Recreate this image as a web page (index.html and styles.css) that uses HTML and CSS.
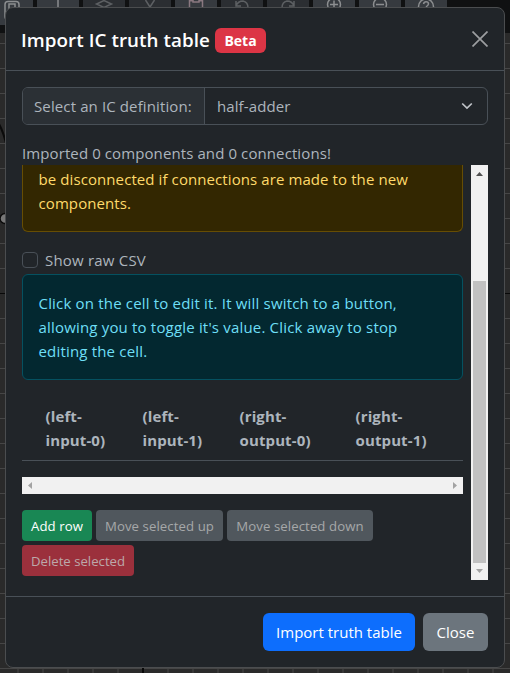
FILE: index.html
```html
<!DOCTYPE html>
<html lang="en">
<head>
<meta charset="utf-8">
<title>Import IC truth table</title>
<link rel="stylesheet" href="styles.css">
</head>
<body>
<div class="workspace">
  <svg class="canvas" width="510" height="673" aria-hidden="true">
    <defs>
      <pattern id="grid" x="17" y="18" width="25" height="25" patternUnits="userSpaceOnUse">
        <path d="M0 .5H25M1 0V25" stroke="#464646" stroke-width="1" fill="none"/>
      </pattern>
    </defs>
    <rect width="510" height="673" fill="#2a2a2a"/>
    <rect width="510" height="673" fill="url(#grid)"/>
    <path d="M0 293.5H510" stroke="#080808" stroke-width="1"/>
    <path d="M143 0V673" stroke="#080808" stroke-width="2"/>
    <path d="M-1 124Q3 131 6 143" stroke="#0a0a0a" stroke-width="2" fill="none"/>
    <circle cx="5" cy="218.500" r="5" fill="#777" stroke="#0a0a0a" stroke-width="1.500"/>
  </svg>
  <div class="toolbar">
    <span class="tool first"><svg viewBox="0 0 22 22"><rect x="4" y="1.500" width="14" height="18" rx="3"/><rect x="8" y="4" width="6" height="10"/></svg></span>
    <span class="tool"><svg viewBox="0 0 22 22"><path d="M11 0V18"/></svg></span>
    <span class="tool dim"><svg viewBox="0 0 22 22"><path d="M11 .5L18.500 4L11 7.500L3.500 4ZM3.500 8L11 12L18.500 8"/></svg></span>
    <span class="tool dim"><svg viewBox="0 0 22 22"><path d="M6.500 0L11 7L15.500 0M11 7V16"/></svg></span>
    <span class="tool paste"><svg viewBox="0 0 22 22"><path d="M8 .8H4.500V18H17.500V.8H14M8 -1V2H14V-1"/></svg></span>
    <span class="tool dim"><svg viewBox="0 0 22 22"><path d="M5 1V6H10M5 6Q7 1 12 1Q17 2 17 8"/></svg></span>
    <span class="tool dim"><svg viewBox="0 0 22 22"><path d="M17 1V6H12M17 6Q15 1 10 1Q5 2 5 8"/></svg></span>
    <span class="tool"><svg viewBox="0 0 22 22"><circle cx="11" cy="4.500" r="6.500"/><path d="M7 4.500H15M11 .5V8.500"/></svg></span>
    <span class="tool"><svg viewBox="0 0 22 22"><circle cx="11" cy="4.500" r="6.500"/><path d="M7 4.500H15"/></svg></span>
    <span class="tool"><svg viewBox="0 0 22 22"><circle cx="11" cy="6.500" r="7.500"/><path d="M8.500 4Q9 1.800 11 1.800Q13.500 1.800 13.500 4Q13.500 5 11 7"/></svg></span>
  </div>
  <section class="modal" role="dialog">
    <header class="modal-header">
      <h1 class="title">Import IC truth table</h1>
      <span class="badge">Beta</span>
      <svg class="close" viewBox="0 0 16 16"><path d="M.5 .5L15.500 15.500M15.500 .5L.5 15.500"/></svg>
    </header>
    <main class="modal-body">
      <div class="input-group">
        <label class="group-label">Select an IC definition:</label>
        <div class="select"><span class="select-value">half-adder</span>
          <svg class="chevron" viewBox="0 0 12 8"><path d="M1.200 1.500L6 6L10.800 1.500"/></svg>
        </div>
      </div>
      <div class="status">Imported 0 components and 0 connections!</div>
      <div class="scroll-area">
        <div class="content">
          <div class="alert warning">
            <div>be disconnected if connections are made to the new</div>
            <div>components.</div>
          </div>
          <div class="check"><span class="box"></span><span class="csv">Show raw CSV</span></div>
          <div class="alert info">
            <div>Click on the cell to edit it. It will switch to a button,</div>
            <div>allowing you to toggle it's value. Click away to stop</div>
            <div>editing the cell.</div>
          </div>
          <div class="table-head">
            <div>(left-<br>input-0)</div>
            <div>(left-<br>input-1)</div>
            <div>(right-<br>output-0)</div>
            <div>(right-<br>output-1)</div>
          </div>
          <div class="hbar">
            <svg viewBox="0 0 4 7"><path d="M4 0V7L0 3.500Z"/></svg>
            <svg viewBox="0 0 4 7"><path d="M0 0V7L4 3.500Z"/></svg>
          </div>
          <div class="actions">
            <button class="btn small add">Add row</button>
            <button class="btn small up">Move selected up</button>
            <button class="btn small down">Move selected down</button>
            <button class="btn small delete">Delete selected</button>
          </div>
        </div>
        <div class="vbar">
          <svg class="arrow-up" viewBox="0 0 7 4"><path d="M0 4H7L3.500 0Z"/></svg>
          <div class="thumb"></div>
          <svg class="arrow-down" viewBox="0 0 7 4"><path d="M0 0H7L3.500 4Z"/></svg>
        </div>
      </div>
    </main>
    <footer class="modal-footer">
      <button class="btn primary">Import truth table</button>
      <button class="btn secondary">Close</button>
    </footer>
  </section>
</div>
</body>
</html>
```
FILE: styles.css
```css
* { box-sizing: border-box; }
body { margin: 0; overflow: hidden; background: #2a2a2a; }
.workspace {
  position: relative;
  width: 510px;
  height: 673px;
  overflow: hidden;
  font: 15px/24px "Open Sans", "Noto Sans", sans-serif;
  color: #adb5bd;
}
.canvas { position: absolute; inset: 0; }
.toolbar {
  position: absolute;
  top: 0;
  left: 0;
  width: 510px;
  height: 33px;
  display: flex;
  gap: 4px;
  background: #101112;
}
.tool { width: 42px; height: 25px; background: #363a3f; display: flex; justify-content: center; flex: none; }
.tool.first { width: 33px; padding-right: 9px; }
.tool svg { width: 22px; height: 22px; fill: none; stroke: #8c8e90; stroke-width: 1.5; }
.tool.dim { background: #2b2e32; }
.tool.dim svg { stroke: #5d6063; }
.tool.paste svg { stroke: #8a7880; }
.modal {
  position: absolute;
  left: 5px;
  top: 7px;
  width: 500px;
  height: 661px;
  display: flex;
  flex-direction: column;
  background: #212529;
  border: 1px solid #4b4d4f;
  border-radius: 8px;
}
.modal-header { display: flex; align-items: center; height: 63px; padding: 0 16px; border-bottom: 1px solid #495057; flex: none; }
.title { margin: 0 0 0 -1px; font-size: 18.800px; line-height: 30px; font-weight: 600; letter-spacing: .07px; color: #fff; white-space: nowrap; width: 194px; padding-top: 2px; }
.badge { width: 51px; height: 25px; margin-top: 3px; border-radius: 6px; background: #dc3545; color: #fff; font-size: 14px; font-weight: 700; line-height: 26px; text-align: center; }
.close { width: 16px; height: 16px; margin-left: auto; fill: none; stroke: #9c9ea0; stroke-width: 1.700; }
.modal-body { padding: 16px; flex: 1; min-height: 0; }
.input-group { display: flex; height: 38px; border: 1px solid #495057; border-radius: 6px; overflow: hidden; }
.group-label { width: 182px; padding: 6px 11px; line-height: 25px; letter-spacing: .12px; background: #2b3035; border-right: 1px solid #495057; white-space: nowrap; }
.select { flex: 1; display: flex; align-items: center; justify-content: space-between; padding: 0 14px 0 12px; letter-spacing: .1px; }
.chevron { width: 12px; height: 8px; fill: none; stroke: #c0c4c8; stroke-width: 1.700; }
.status { margin-top: 17px; line-height: 23px; letter-spacing: .1px; white-space: nowrap; }
.scroll-area { display: flex; justify-content: space-between; height: 415px; }
.content { width: 441px; }
.alert { border: 1px solid; border-radius: 6px; padding: 16px 15.500px; white-space: nowrap; }
.warning { height: 67px; padding-top: 2px; border-top: 0; border-radius: 0 0 6px 6px; background: #332701; border-color: #664d03; color: #ffda6a; letter-spacing: .09px; }
.check { display: flex; align-items: center; gap: 7px; height: 24px; margin: 16px 0 2px; letter-spacing: .2px; }
.box { width: 16px; height: 16px; border: 1px solid #495057; border-radius: 4px; }
.info { height: 106px; background: #032830; border-color: #055160; color: #6edff6; letter-spacing: .18px; }
.table-head { display: grid; grid-template-columns: 97px 97px 116px 1fr; margin-top: 16px; height: 65px; padding: 8px 0 0 23.500px; border-bottom: 1px solid #495057; font-weight: 700; letter-spacing: .12px; white-space: nowrap; }
.hbar { display: flex; justify-content: space-between; align-items: center; height: 17px; margin: 16px 0; padding: 0 6px; background: #f1f1f1; }
.hbar svg { width: 4px; height: 7px; fill: #a3a3a3; }
.actions { display: flex; flex-wrap: wrap; gap: 4px; }
.btn { border: 0; border-radius: 6px; padding: 0; height: 38px; font: 15px/38px "Open Sans", "Noto Sans", sans-serif; color: #fff; text-align: center; white-space: nowrap; }
.btn.small { height: 31px; border-radius: 4px; font-size: 13.200px; line-height: 32px; letter-spacing: .08px; }
.add { width: 70px; background: #198754; }
.up { width: 127px; background: #50575d; }
.down { width: 146px; background: #50575d; }
.up, .down { color: #a6a8a9; }
.delete { width: 112px; background: #9b303c; color: #bca8aa; }
.btn.delete { letter-spacing: 0; }
.vbar { display: flex; flex-direction: column; align-items: center; width: 17px; padding: 7px 2px; background: #f1f1f1; }
.vbar svg { width: 7px; height: 4px; flex: none; }
.arrow-up { fill: #505050; }
.arrow-down { fill: #a3a3a3; margin-top: 6px; }
.thumb { width: 13px; height: 282px; margin-top: 105px; background: #c1c1c1; flex: none; }
.modal-footer { display: flex; align-items: center; justify-content: flex-end; gap: 8px; height: 71px; padding: 0 16px; border-top: 1px solid #495057; flex: none; }
.primary { width: 152px; background: #0d6efd; }
.secondary { width: 65px; background: #6c757d; }
```
